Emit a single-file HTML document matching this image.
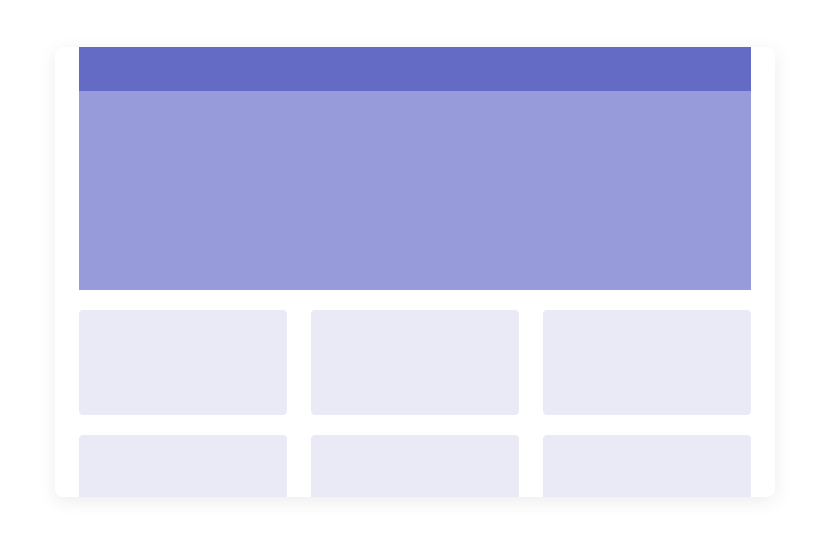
<!DOCTYPE html>
<html><head><style>
html,body{margin:0;padding:0;background:#fff;width:830px;height:545px;overflow:hidden}
.card{position:absolute;left:55px;top:47px;width:720px;height:450px;background:#fff;border-radius:8px;box-shadow:0 4px 18px rgba(0,0,0,0.08);overflow:hidden}
.hdr{position:absolute;left:24px;top:0;width:672px;height:44px;background:#646bc4}
.hero{position:absolute;left:24px;top:44px;width:672px;height:199px;background:#979bd9}
.t{position:absolute;width:208px;height:104px;background:#eaeaf6;border-radius:4px}
</style></head><body>
<div class="card">
<div class="hdr"></div><div class="hero"></div>
<div class="t" style="left:24px;top:263px;height:105px"></div>
<div class="t" style="left:256px;top:263px;height:105px"></div>
<div class="t" style="left:488px;top:263px;height:105px"></div>
<div class="t" style="left:24px;top:388px"></div>
<div class="t" style="left:256px;top:388px"></div>
<div class="t" style="left:488px;top:388px"></div>
</div>
</body></html>
